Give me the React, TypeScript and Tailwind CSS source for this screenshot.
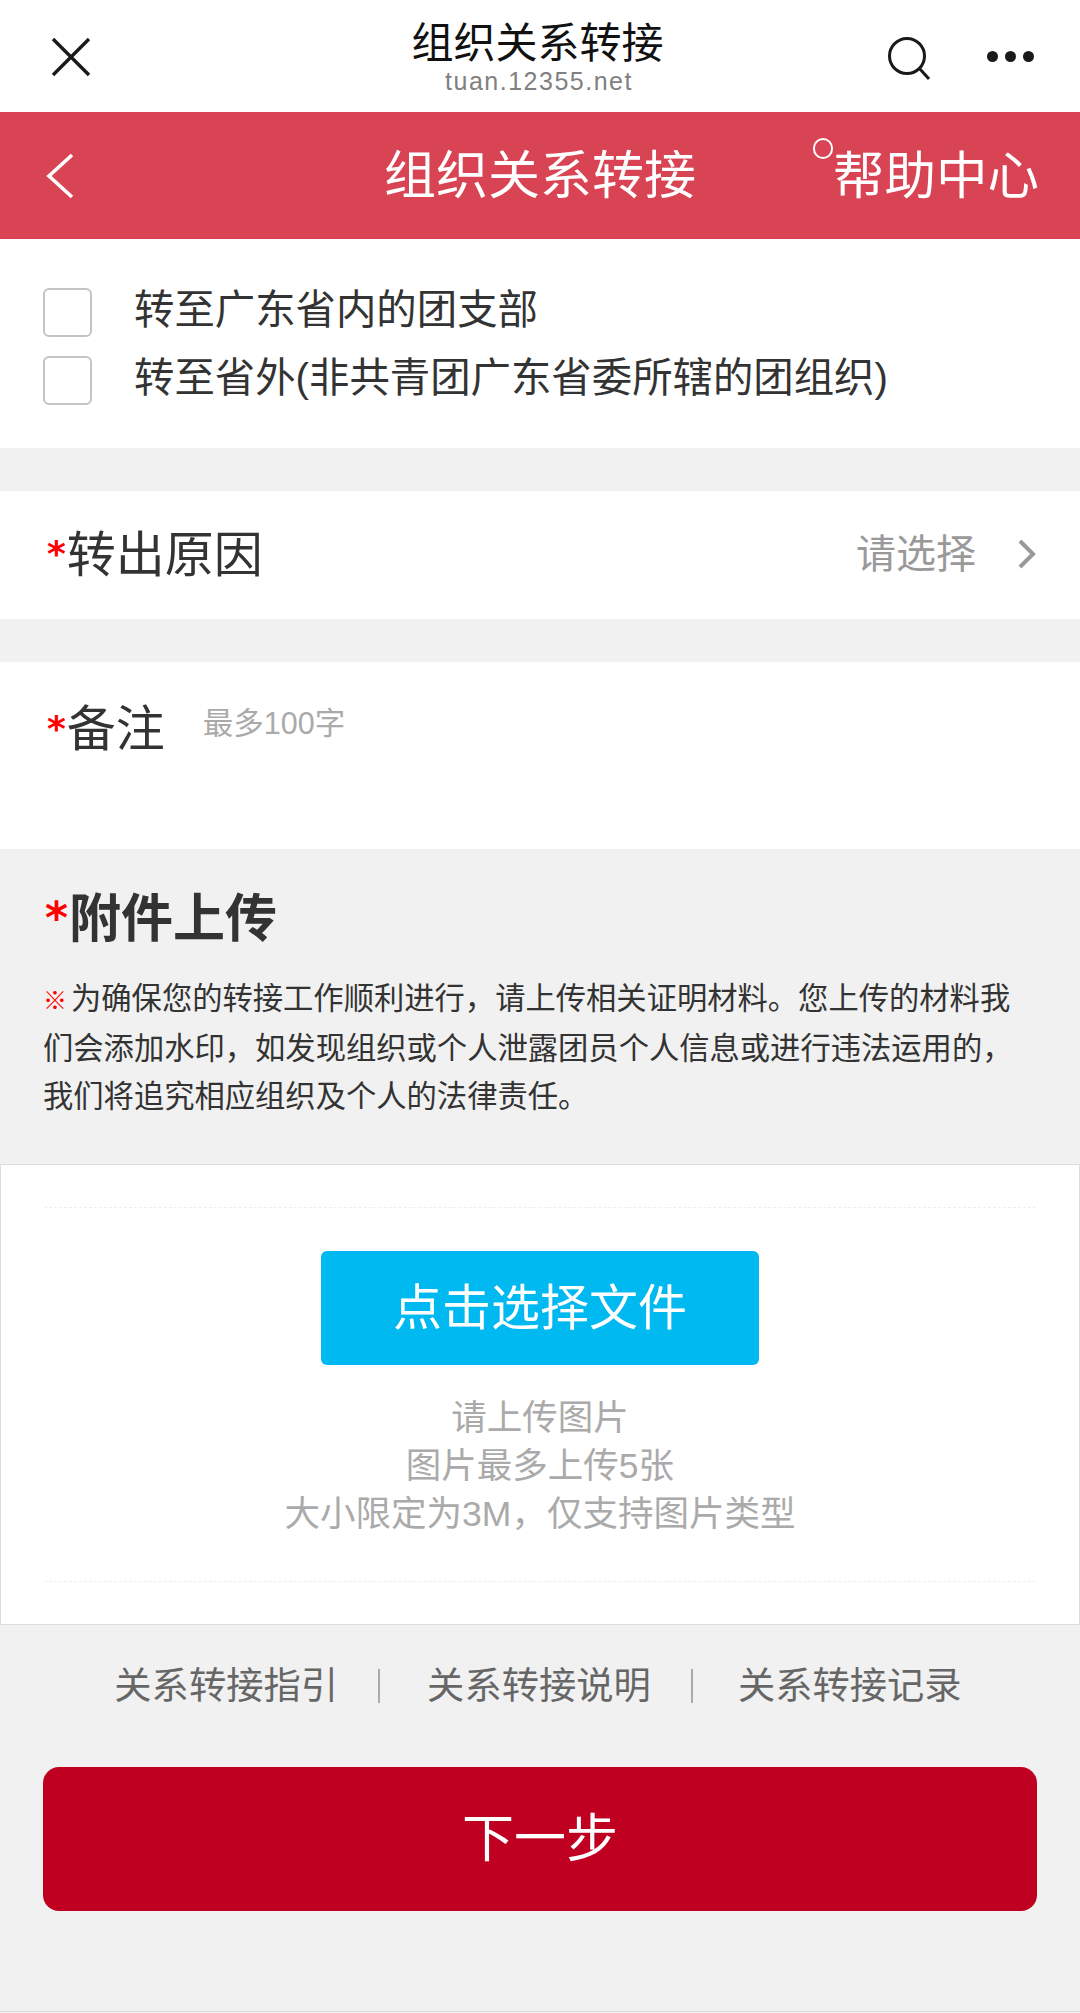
const fontStack = "font-['Liberation_Sans','Noto_Sans_CJK_SC',sans-serif]";

function Star({ className }: { className: string }) {
  return <span className={`text-[#ff0000] font-bold leading-none font-['DejaVu_Sans',sans-serif] ${className}`}>*</span>;
}

function CheckRow({ label }: { label: string }) {
  return (
    <div className="flex items-center h-[68px]">
      <span className="w-[49px] h-[49px] shrink-0 bg-white border-2 border-[#c4c4c4] rounded-[6px]" />
      <span className="ml-[42px] -mt-[4px] text-[40.4px] leading-none text-[#333] whitespace-nowrap">{label}</span>
    </div>
  );
}

export default function App() {
  return (
    <div className={`w-[1080px] h-[2013px] overflow-hidden bg-[#f1f1f1] ${fontStack}`}>
      {/* wechat title bar */}
      <header className="relative h-[112px] bg-white flex flex-col items-center">
        <svg className="absolute left-[50px] top-[36px]" width="42" height="42" viewBox="0 0 42 42" fill="none" stroke="#1a1a1a" strokeWidth="3.4">
          <path d="M3 3 L39 39 M39 3 L3 39" />
        </svg>
        <div className="mt-[15px] -ml-[5px] text-[42px] leading-[58px] text-[#111]">组织关系转接</div>
        <div className="-mt-[5px] -ml-[2px] text-[25px] leading-[26px] tracking-[1.5px] text-[#808080]">tuan.12355.net</div>
        <svg className="absolute left-[886px] top-[35px]" width="46" height="46" viewBox="0 0 46 46" fill="none" stroke="#1a1a1a" strokeWidth="3">
          <circle cx="21" cy="21" r="17.5" />
          <path d="M33 33 L43 44" />
        </svg>
        <div className="absolute left-[987px] top-[51px] flex gap-[7px]">
          <span className="w-[11px] h-[11px] rounded-full bg-[#1a1a1a]" />
          <span className="w-[11px] h-[11px] rounded-full bg-[#1a1a1a]" />
          <span className="w-[11px] h-[11px] rounded-full bg-[#1a1a1a]" />
        </div>
      </header>

      {/* page header */}
      <div className="relative h-[127px] bg-[#d84454] flex items-center justify-center text-white">
        <svg className="absolute left-[43px] top-[40px]" width="34" height="48" viewBox="0 0 34 48" fill="none" stroke="#fff" strokeWidth="3.6">
          <path d="M29 3 L6 24 L29 45" />
        </svg>
        <span className="text-[52px] leading-none">组织关系转接</span>
        <span className="absolute left-[813px] top-[26px] w-[20px] h-[21px] rounded-full border-2 border-white" />
        <span className="absolute left-[833px] top-[39px] text-[51.5px] leading-none">帮助中心</span>
      </div>

      {/* transfer target */}
      <section className="h-[209px] bg-white pl-[43px] pt-[39px]">
        <CheckRow label="转至广东省内的团支部" />
        <CheckRow label="转至省外(非共青团广东省委所辖的团组织)" />
      </section>

      <section className="mt-[43px] h-[128px] bg-white pl-[47px] pr-[43px] flex items-center">
        <Star className="text-[36px] mr-[1px] -mt-[3px]" />
        <span className="text-[49px] leading-none text-[#333] mt-[1px]">转出原因</span>
        <span className="ml-auto text-[40px] leading-none text-[#999] -mt-[2px]">请选择</span>
        <svg className="ml-[41px] -mt-[2px]" width="20" height="32" viewBox="0 0 20 32" fill="none" stroke="#999" strokeWidth="4">
          <path d="M3 3 L16 16 L3 29" />
        </svg>
      </section>

      <section className="mt-[43px] h-[187px] bg-white pl-[47px] pt-[42px] flex items-start">
        <Star className="text-[36px] mr-[1px] mt-[7px]" />
        <span className="text-[49px] leading-[50px] text-[#333]">备注</span>
        <span className="ml-[38px] -mt-[1px] text-[30.5px] leading-[40px] text-[#aaa]">最多100字</span>
      </section>

      {/* attachments */}
      <section className="pl-[43px] pr-[60px] pt-[43px] h-[315px]">
        <div className="flex items-center pl-[2px] h-[54px]">
          <Star className="text-[44px] mr-[1px] -mt-[2px]" />
          <span className="text-[52px] leading-none font-bold text-[#333]">附件上传</span>
        </div>
        <p className="mt-[29px] text-[30.3px] leading-[48px] text-[#333]">
          <span className="text-[#ff0000] text-[24px] font-bold mr-[4px]">※</span>为确保您的转接工作顺利进行，请上传相关证明材料。您上传的材料我们会添加水印，如发现组织或个人泄露团员个人信息或进行违法运用的，我们将追究相应组织及个人的法律责任。
        </p>
      </section>

      <section className="h-[461px] bg-white border border-[#ddd] px-[43px] pt-[42px]">
        <div className="border-t border-dashed border-[#eee] h-[374px] flex flex-col items-center pt-[43px]">
          <button className="w-[438px] h-[114px] rounded-[6px] bg-[#00b9f1] text-white text-[49px] leading-none">点击选择文件</button>
          <div className="mt-[29px] text-[35.5px] leading-[48px] text-[#aaa] text-center">
            <div>请上传图片</div>
            <div>图片最多上传5张</div>
            <div>大小限定为3M，仅支持图片类型</div>
          </div>
        </div>
        <div className="border-t border-dashed border-[#eee]" />
      </section>

      {/* links */}
      <nav className="mt-[37px] h-[50px] pr-[4px] flex items-center justify-center text-[37.3px] leading-none text-[#666]">
        <span>关系转接指引</span>
        <span className="ml-[40px] mr-[47px] w-[2px] h-[34px] -mt-[2px] bg-[#aaa]" />
        <span>关系转接说明</span>
        <span className="ml-[40px] mr-[45px] w-[2px] h-[34px] -mt-[2px] bg-[#aaa]" />
        <span>关系转接记录</span>
      </nav>

      <div className="mt-[55px] px-[43px]">
        <button className="w-full h-[144px] rounded-[16px] bg-[#c00020] text-white text-[52px] leading-none">下一步</button>
      </div>

      <div className="mt-[100px] border-t border-[#ddd]" />
    </div>
  );
}
